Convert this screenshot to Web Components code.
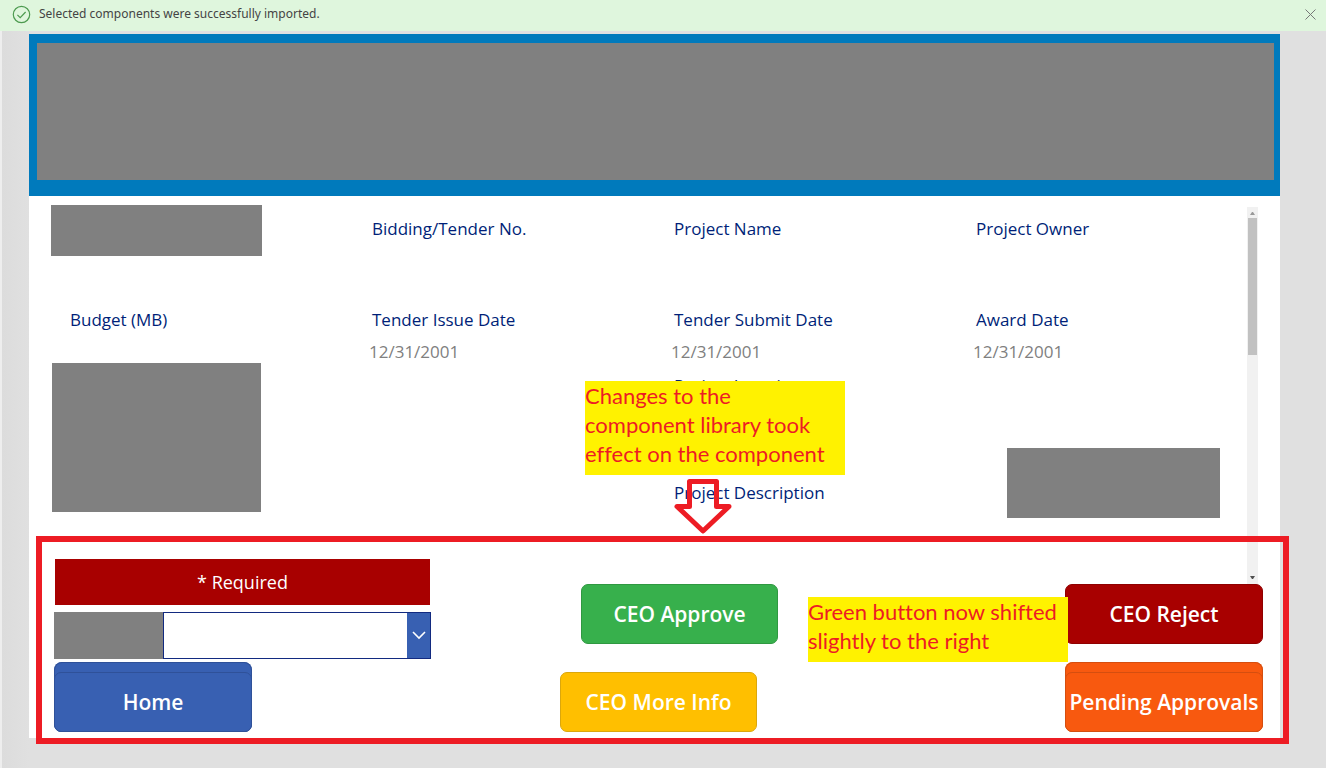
<!DOCTYPE html>
<html lang="en">
<head>
<meta charset="utf-8">
<title>Tender approval</title>
<style>
html, body { margin: 0; min-height: 100%; background: #e0e0e0; font-family: "Open Sans", sans-serif; }
</style>
</head>
<body>
<approval-page></approval-page>
<script>
const define = (name, html) => customElements.define(name, class extends HTMLElement {
  constructor() {
    super();
    const t = document.createElement('template');
    t.innerHTML = html;
    this.attachShadow({ mode: 'open' }).append(t.content.cloneNode(true));
  }
});

define('message-bar', `
<style>
:host { display: flex; align-items: center; box-sizing: border-box; height: 31px; padding: 0 9px 3px 12px; gap: 8px; background: #dff6dd; color: #444; font: 12px/20px "Noto Sans", sans-serif; }
span { flex: 1; }
svg { display: block; }
button { border: 0; padding: 0; background: none; }
</style>
<svg width="19" height="19" viewBox="0 0 19 19" fill="none" stroke="#4c9a4f" stroke-width="1.2"><circle cx="9.5" cy="9.5" r="8.2"/><path d="M5.4 9.8l2.8 2.8 5.4-5.6"/></svg>
<span><slot></slot></span>
<button aria-label="Dismiss"><svg width="13" height="13" viewBox="0 0 13 13" stroke="#777" stroke-width="1"><path d="M1.5 1.5l10 10M11.5 1.5l-10 10"/></svg></button>
`);

define('redacted-block', `<style>:host { display: block; box-sizing: border-box; background: #808080; }</style>`);

define('app-banner', `
<style>
:host { display: block; box-sizing: border-box; height: 162px; padding: 9px 6px 16px 8px; background: #007abc; }
redacted-block { height: 100%; }
</style>
<redacted-block></redacted-block>
`);

define('data-field', `
<style>
:host { display: block; padding: 12px 0 0 19px; color: #001f78; font-size: 17px; line-height: 24px; }
::slotted([slot=value]) { display: block; margin: 10px 0 0 -3px; color: #808080; line-height: 20px; }
</style>
<slot></slot><slot name="value"></slot>
`);

define('scroll-track', `
<style>
:host { display: flex; flex-direction: column; align-items: center; box-sizing: border-box; width: 11px; background: #f1f1f1; padding: 5px 0; gap: 3px; }
i { width: 9px; height: 137px; background: #c1c1c1; }
svg { display: block; }
svg:last-child { margin-top: auto; }
</style>
<svg width="5" height="3"><path d="M0 3h5L3 0H2z" fill="#999"/></svg><i></i>
<svg width="5" height="3"><path d="M0 0h5L3 3H2z" fill="#505050"/></svg>
`);

define('tender-form', `
<style>
:host { display: flex; height: 388px; box-sizing: border-box; padding: 9px 22px 0; }
.grid { flex: 1; display: grid; grid-template-columns: 302fr 302fr 302fr 290fr; grid-template-rows: 91px 66px 107px 1fr; }
.title { width: 211px; height: 51px; }
.left { grid-area: 3 / 1 / 5 / 2; width: 209px; height: 149px; margin: 1px 0 0 1px; }
.right { grid-area: 3 / 4 / 5 / 5; width: 213px; height: 70px; margin: 86px 0 0 50px; }
scroll-track { margin-top: 2px; }
.c3 { grid-column: 3; }
</style>
<div class="grid">
  <redacted-block class="title"></redacted-block>
  <data-field>Bidding/Tender No.</data-field>
  <data-field>Project Name</data-field>
  <data-field>Project Owner</data-field>
  <data-field>Budget (MB)</data-field>
  <data-field>Tender Issue Date<span slot="value">12/31/2001</span></data-field>
  <data-field>Tender Submit Date<span slot="value">12/31/2001</span></data-field>
  <data-field>Award Date<span slot="value">12/31/2001</span></data-field>
  <data-field class="c3">Project Location</data-field>
  <data-field class="c3">Project Description</data-field>
  <redacted-block class="left"></redacted-block>
  <redacted-block class="right"></redacted-block>
</div>
<scroll-track></scroll-track>
`);

define('app-button', `
<style>
:host { display: block; width: 197px; height: 60px; color: #fff; }
:host([stacked]) { height: 70px; box-sizing: border-box; padding-top: 10px; border-radius: 8px; background: var(--fill); box-shadow: inset 0 0 0 1px var(--edge); }
button { display: block; width: 100%; height: 60px; padding: 0; border: 1px solid var(--edge); border-radius: 7px; background: var(--fill); color: inherit; font: 600 21px/28px "Open Sans", sans-serif; white-space: nowrap; }
</style>
<button><slot></slot></button>
`);

define('required-picker', `
<style>
:host { display: block; width: 377px; }
label { display: block; height: 46px; margin: 0 1px 7px; background: #a80000; color: #fff; font-size: 18px; line-height: 46px; text-align: center; }
.box { display: flex; height: 47px; box-sizing: border-box; position: relative; }
select { appearance: none; flex: 1; min-width: 0; height: 47px; border: 1px solid #122a80; border-radius: 0; background: linear-gradient(#3860b2, #3860b2) right / 23px 100% no-repeat #fff; margin: 0; }
redacted-block { width: 109px; }
svg { position: absolute; right: 5px; top: 19px; pointer-events: none; }
</style>
<label for="pick">* Required</label>
<div class="box"><redacted-block></redacted-block><select id="pick"></select>
<svg width="14" height="9" fill="none" stroke="#fff" stroke-width="1.6"><path d="M1 1l6 6 6-6"/></svg></div>
`);

define('action-footer', `
<style>
:host { display: grid; grid-template-columns: 377px 129fr 218px 287fr 198px; align-items: end; margin-top: -25px; padding: 0 17px 6px 25px; position: relative; }
.col { display: grid; }
.mid { grid-column: 3; gap: 28px; }
.end { grid-column: 5; gap: 18px; }
.col > required-picker { margin-bottom: 3px; }
.approve { justify-self: end; --fill: #37b04c; --edge: #2f9841; }
.more { --fill: #ffbf00; --edge: #dba70c; }
.reject { --fill: #a80000; --edge: #8f0000; }
.home { --fill: #3860b2; --edge: #2f5199; }
.pending { --fill: #f8590f; --edge: #d54e0f; }
.home, .reject, .pending { width: 198px; }
</style>
<div class="col"><required-picker></required-picker><app-button class="home" stacked>Home</app-button></div>
<div class="col mid"><app-button class="approve">CEO Approve</app-button><app-button class="more">CEO More Info</app-button></div>
<div class="col end"><app-button class="reject">CEO Reject</app-button><app-button class="pending" stacked>Pending Approvals</app-button></div>
`);

define('callout-note', `
<style>:host { display: block; box-sizing: border-box; width: 260px; padding: 0 0 7px; background: #fff200; color: #ed1c24; font: 22px/29px Lato, sans-serif; font-variant-ligatures: none; white-space: nowrap; }</style>
<slot></slot>
`);

define('approval-page', `
<style>
:host { display: block; position: relative; min-height: 768px; box-sizing: border-box; background: linear-gradient(90deg, #eee 2px, #dcdcdc 2px, #e0e0e0 29px); }
main { margin: 3px 46px 0 29px; background: #fff; }
.frame { position: absolute; inset: 536px 37px 24px 36px; border: 6px solid #ed1c24; pointer-events: none; }
.first { position: absolute; top: 381px; left: calc(50% - 78px); }
.second { position: absolute; top: 597px; right: 258px; }
.arrow { position: absolute; top: 479px; left: calc(50% + 11px); }
</style>
<message-bar>Selected components were successfully imported.</message-bar>
<main>
  <app-banner></app-banner>
  <tender-form></tender-form>
  <action-footer></action-footer>
</main>
<div class="frame"></div>
<callout-note class="first">Changes to the<br>component library took<br>effect on the component</callout-note>
<callout-note class="second">Green button now shifted<br>slightly to the right</callout-note>
<svg class="arrow" width="58" height="55" fill="none" stroke="#ed1c24" stroke-width="5"><path d="M15.500 2.500H42.500V27.500H55L29 52 3 27.500H15.500z" stroke-linejoin="round"/></svg>
`);
</script>
</body>
</html>
